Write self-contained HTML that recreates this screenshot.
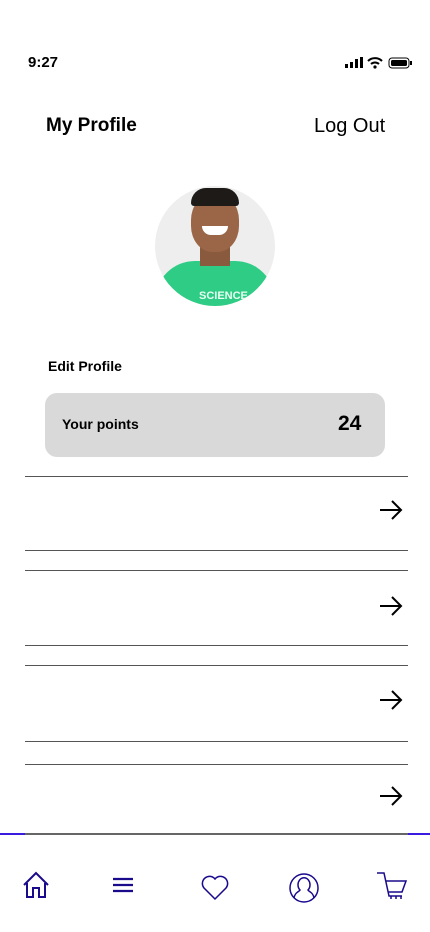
<!DOCTYPE html><html><head><style>
body{margin:0;width:430px;height:932px;background:#fff;font-family:"Liberation Sans",sans-serif;position:relative;overflow:hidden}
.a{position:absolute}
.l{position:absolute;left:25px;width:383px;height:1px;background:#555}
</style></head><body>
<div class="a" style="left:28px;top:54px;font-size:15px;font-weight:bold">9:27</div>
<svg class="a" style="left:344px;top:56px" width="70" height="14"><rect x="1" y="8" width="3" height="4" fill="#000"/><rect x="6" y="6" width="3" height="6" fill="#000"/><rect x="11" y="3" width="3" height="9" fill="#000"/><rect x="16" y="1" width="3" height="11" fill="#000"/><path d="M24 5a10 10 0 0 1 14 0M27 8a6 6 0 0 1 8 0" stroke="#000" stroke-width="2" fill="none"/><circle cx="31" cy="11" r="1.6"/><rect x="45" y="2" width="20" height="10" rx="3" fill="none" stroke="#000"/><rect x="47" y="4" width="16" height="6" rx="1.5"/><rect x="66" y="5" width="2" height="4"/></svg>
<div class="a" style="left:46px;top:115px;font-size:19px;font-weight:bold">My Profile</div>
<div class="a" style="left:314px;top:115px;font-size:20px">Log Out</div>
<div class="a" style="left:155px;top:186px;width:120px;height:120px;border-radius:50%;overflow:hidden;background:#eeeeee">
<div class="a" style="left:0;top:75px;width:120px;height:60px;background:#2ecc85;border-radius:40px 40px 0 0"></div>
<div class="a" style="left:45px;top:50px;width:30px;height:30px;background:#8a5a3e"></div>
<div class="a" style="left:36px;top:8px;width:48px;height:58px;border-radius:45%;background:#9a6647"></div>
<div class="a" style="left:36px;top:2px;width:48px;height:18px;border-radius:20px 20px 4px 4px;background:#1d1a18"></div>
<div class="a" style="left:47px;top:40px;width:26px;height:9px;border-radius:0 0 12px 12px;background:#fff"></div>
<div class="a" style="left:44px;top:104px;font-size:11px;color:#e8fff4;font-weight:bold">SCIENCE</div>
</div>
<div class="a" style="left:48px;top:358px;font-size:14px;font-weight:bold">Edit Profile</div>
<div class="a" style="left:45px;top:393px;width:340px;height:64px;border-radius:12px;background:#d9d9d9"></div>
<div class="a" style="left:62px;top:416px;font-size:14px;font-weight:bold">Your points</div>
<div class="a" style="left:338px;top:412px;font-size:21px;font-weight:bold">24</div>
<div class="l" style="top:476px"></div><div class="l" style="top:550px"></div>
<div class="l" style="top:570px"></div><div class="l" style="top:645px"></div>
<div class="l" style="top:665px"></div><div class="l" style="top:741px"></div>
<div class="l" style="top:764px"></div>
<svg class="a" style="left:378px;top:500px" width="26" height="320"><g stroke="#000" stroke-width="2" fill="none"><path d="M2 10h21M14 1l9 9-9 9"/><path d="M2 106h21M14 97l9 9-9 9"/><path d="M2 200h21M14 191l9 9-9 9"/><path d="M2 296h21M14 287l9 9-9 9"/></g></svg>
<div class="a" style="left:0;top:833px;width:430px;height:2px;background:#666"></div>
<div class="a" style="left:0;top:833px;width:25px;height:2px;background:#3a1be0"></div>
<div class="a" style="left:408px;top:833px;width:22px;height:2px;background:#3a1be0"></div>
<svg class="a" style="left:0;top:870px" width="430" height="35"><g stroke="#1a0a8c" stroke-width="2" fill="none">
<path d="M24 15L36 3l12 12M27 13v14h6v-9h6v9h6V13"/>
<path d="M113 9h20M113 15h20M113 21h20" stroke-width="2.2"/>
<path d="M215 29l-11-11a6.5 6.5 0 0 1 11-9a6.5 6.5 0 0 1 11 9z" stroke-width="1.5"/>
<circle cx="304" cy="18" r="14" stroke-width="1.5"/><path d="M294 28c1-6 5-6 6-8a6 7 0 1 1 8 0c1 2 5 2 6 8" stroke-width="1.5"/>
<path d="M377 3h7l5 23h13M386 11h20l-4 11h-14M391 26v3M396 26v3M401 26v3" stroke-width="1.5"/>
</g></svg>
</body></html>
